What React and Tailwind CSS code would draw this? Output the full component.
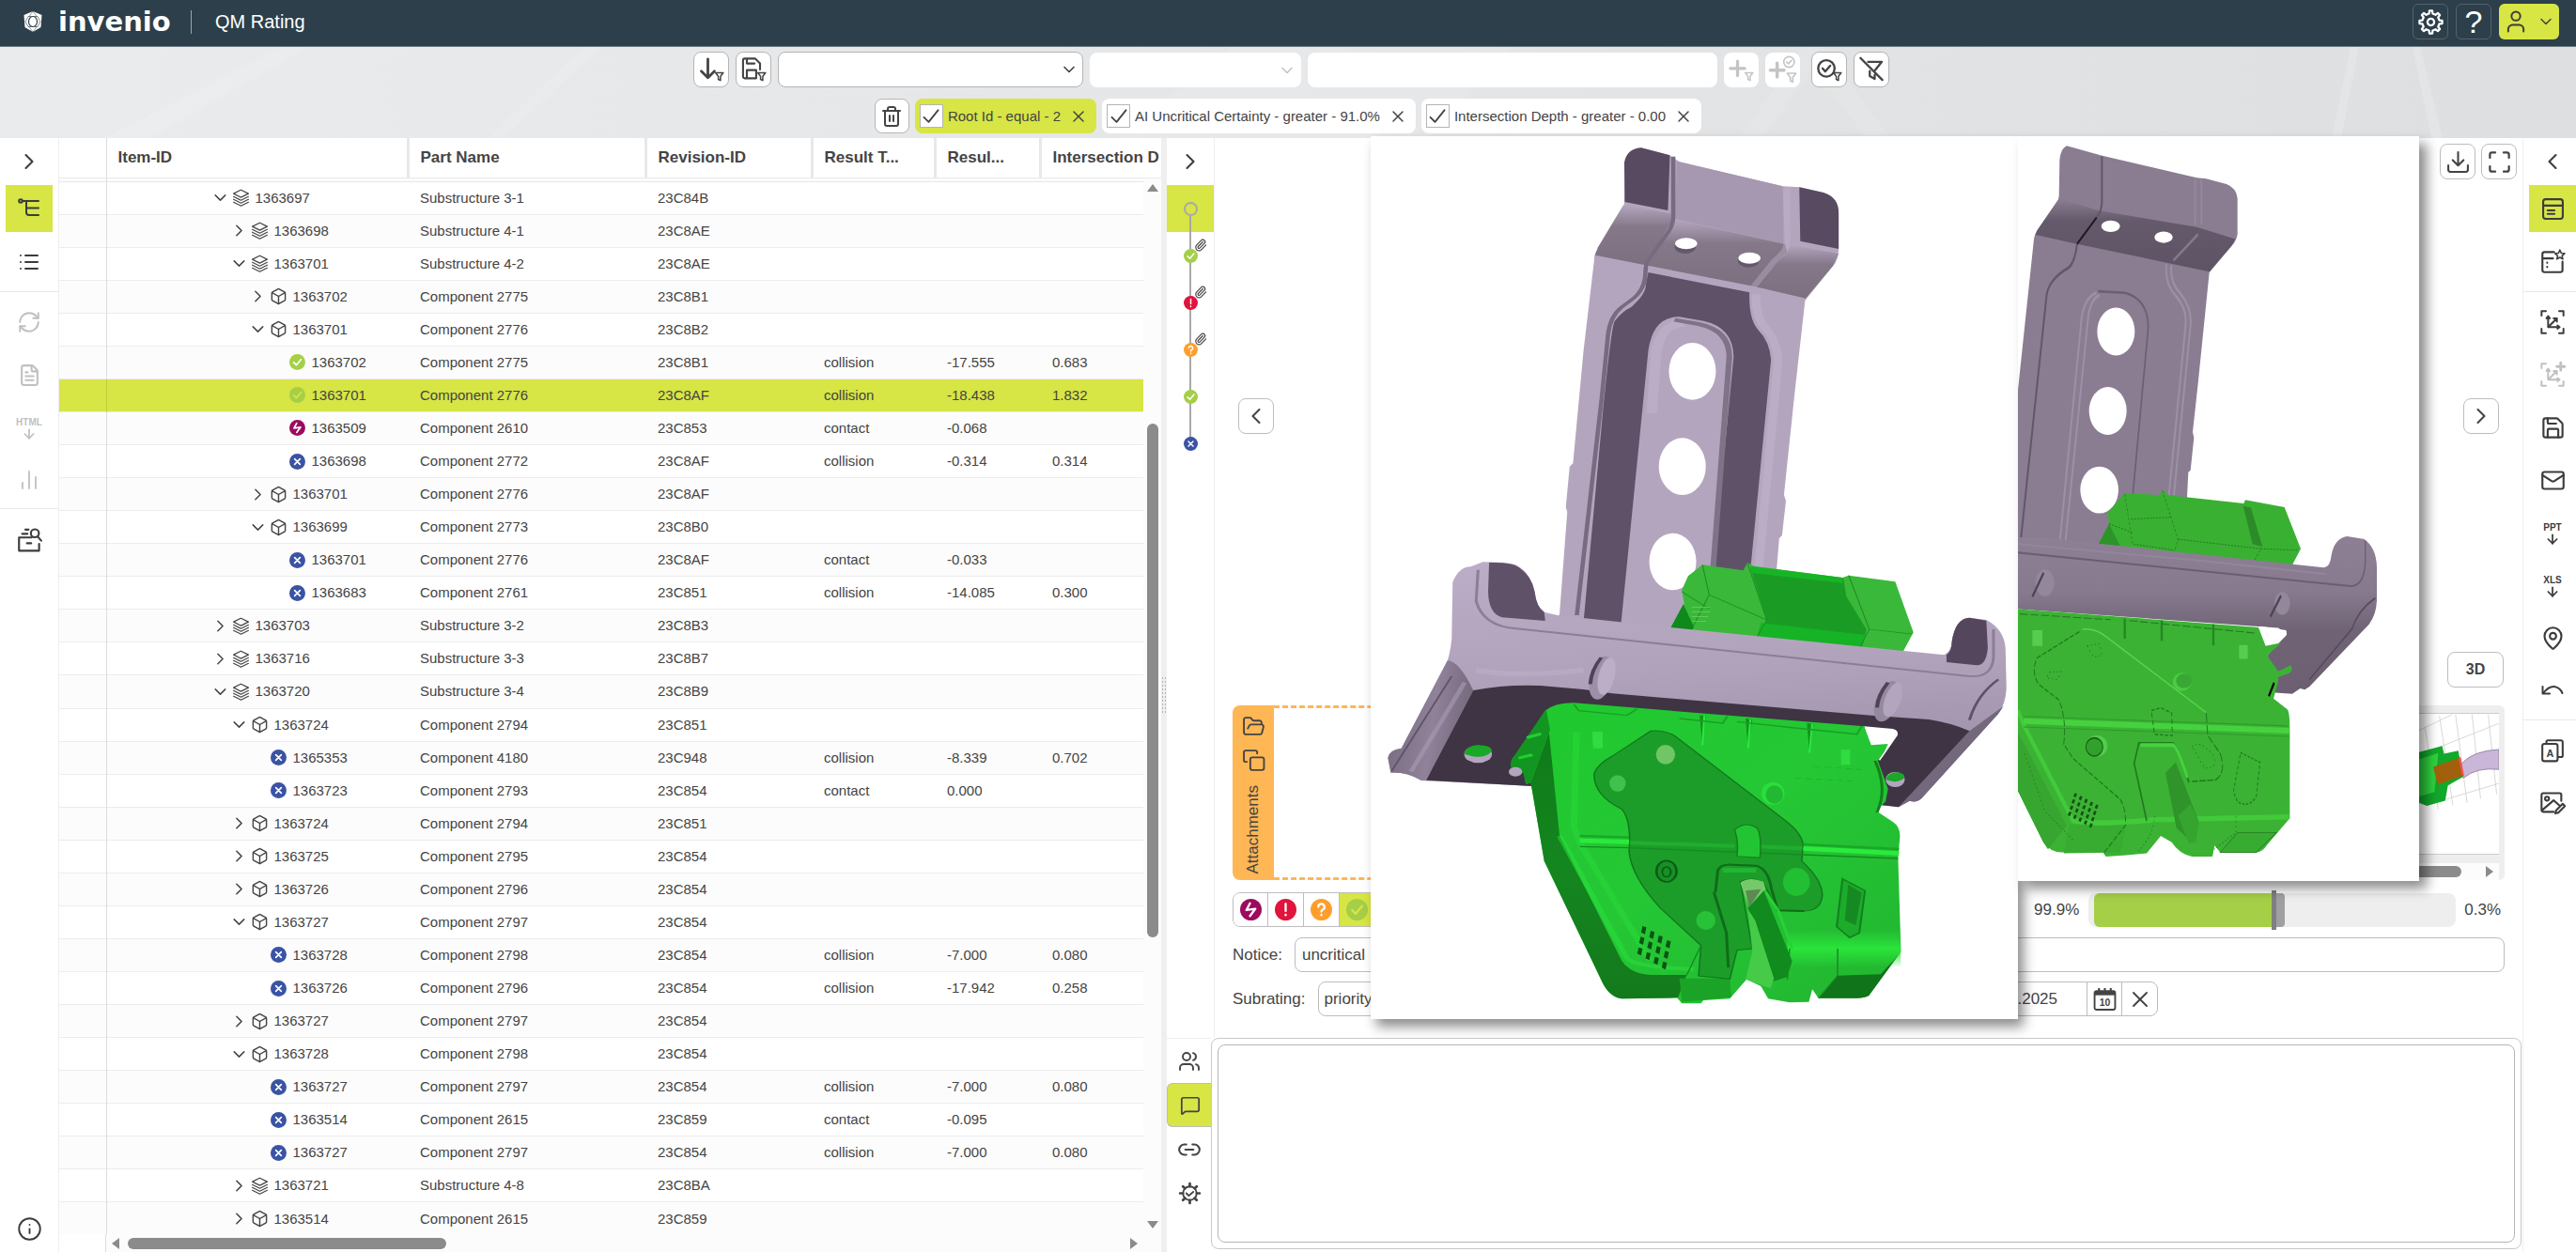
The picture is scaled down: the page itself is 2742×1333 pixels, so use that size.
import React, { useState } from "react";
import {
  ArrowDown,
  Box,
  ChartNoAxesColumn,
  ChevronDown,
  ChevronLeft,
  ChevronRight,
  FileText,
  FolderOpen,
  Info,
  Link2,
  List,
  Mail,
  MapPin,
  Maximize,
  MessageSquare,
  Paperclip,
  RefreshCw,
  Save,
  Trash2,
  User,
  Users,
  X,
} from "lucide-react";

const COLUMNS = [
  { title: "", width: "w-[50px]" },
  { title: "Item-ID", width: "w-[321px]" },
  { title: "Part Name", width: "w-[253px]" },
  { title: "Revision-ID", width: "w-[177px]" },
  { title: "Result T...", width: "w-[131px]" },
  { title: "Resul...", width: "w-[112px]" },
  { title: "Intersection D", width: "w-auto" },
];

// level, kind, open, id, name, revision, type, result, depth
const ROWS = [
  [0, "layers", true, "1363697", "Substructure 3-1", "23C84B"],
  [1, "layers", false, "1363698", "Substructure 4-1", "23C8AE"],
  [1, "layers", true, "1363701", "Substructure 4-2", "23C8AE"],
  [2, "box", false, "1363702", "Component 2775", "23C8B1"],
  [2, "box", true, "1363701", "Component 2776", "23C8B2"],
  [3, "ok", null, "1363702", "Component 2775", "23C8B1", "collision", "-17.555", "0.683"],
  [3, "okSelected", null, "1363701", "Component 2776", "23C8AF", "collision", "-18.438", "1.832"],
  [3, "flash", null, "1363509", "Component 2610", "23C853", "contact", "-0.068"],
  [3, "cross", null, "1363698", "Component 2772", "23C8AF", "collision", "-0.314", "0.314"],
  [2, "box", false, "1363701", "Component 2776", "23C8AF"],
  [2, "box", true, "1363699", "Component 2773", "23C8B0"],
  [3, "cross", null, "1363701", "Component 2776", "23C8AF", "contact", "-0.033"],
  [3, "cross", null, "1363683", "Component 2761", "23C851", "collision", "-14.085", "0.300"],
  [0, "layers", false, "1363703", "Substructure 3-2", "23C8B3"],
  [0, "layers", false, "1363716", "Substructure 3-3", "23C8B7"],
  [0, "layers", true, "1363720", "Substructure 3-4", "23C8B9"],
  [1, "box", true, "1363724", "Component 2794", "23C851"],
  [2, "cross", null, "1365353", "Component 4180", "23C948", "collision", "-8.339", "0.702"],
  [2, "cross", null, "1363723", "Component 2793", "23C854", "contact", "0.000"],
  [1, "box", false, "1363724", "Component 2794", "23C851"],
  [1, "box", false, "1363725", "Component 2795", "23C854"],
  [1, "box", false, "1363726", "Component 2796", "23C854"],
  [1, "box", true, "1363727", "Component 2797", "23C854"],
  [2, "cross", null, "1363728", "Component 2798", "23C854", "collision", "-7.000", "0.080"],
  [2, "cross", null, "1363726", "Component 2796", "23C854", "collision", "-17.942", "0.258"],
  [1, "box", false, "1363727", "Component 2797", "23C854"],
  [1, "box", true, "1363728", "Component 2798", "23C854"],
  [2, "cross", null, "1363727", "Component 2797", "23C854", "collision", "-7.000", "0.080"],
  [2, "cross", null, "1363514", "Component 2615", "23C859", "contact", "-0.095"],
  [2, "cross", null, "1363727", "Component 2797", "23C854", "collision", "-7.000", "0.080"],
  [1, "layers", false, "1363721", "Substructure 4-8", "23C8BA"],
  [1, "box", false, "1363514", "Component 2615", "23C859"],
];

const INDENT = ["pl-[113px]", "pl-[133px]", "pl-[153px]", "pl-[173px]"];

const STATUS = {
  ok: { color: "#a5cf47", mark: "#fff", d: "M6.5 12.5l4 4 7-8.5" },
  okSelected: { color: "#a5cf47", mark: "#d7e545", d: "M6.5 12.5l4 4 7-8.5" },
  flash: { color: "#9c0b5e", mark: "#fff", d: "M11 5L7 12.500l10-1.500-6 8" },
  cross: { color: "#3a53a4", mark: "#fff", d: "M8 8l8 8M16 8l-8 8" },
  alert: { color: "#e0143c", mark: "#fff", d: "M12 5.5v8M12 17.6v.6" },
  ask: { color: "#ff9e2c", mark: "#fff", d: "M8.6 9a3.4 3.4 0 1 1 4.9 3q-1.5.8-1.5 2.2M12 17.6v.6" },
};

function StatusIcon({ kind, className }) {
  const s = STATUS[kind];
  return (
    <svg viewBox="0 0 24 24" className={className} fill="none" aria-hidden="true">
      <circle cx="12" cy="12" r="12" fill={s.color} />
      <path d={s.d} stroke={s.mark} strokeWidth="2.4" strokeLinecap="round" strokeLinejoin="round" />
    </svg>
  );
}

function Glyph({ size = "size-6", weight = 1.8, children }) {
  return (
    <svg
      viewBox="0 0 24 24"
      className={size}
      fill="none"
      stroke="currentColor"
      strokeWidth={weight}
      strokeLinecap="round"
      strokeLinejoin="round"
      aria-hidden="true"
    >
      {children}
    </svg>
  );
}

// closed outline of a toothed wheel around 12/12
function gearPath(teeth, inner, outer) {
  const step = (Math.PI * 2) / teeth;
  const pts = [];
  for (let i = 0; i < teeth; i++) {
    const a = i * step - Math.PI / 2;
    [
      [-0.27, inner],
      [-0.16, outer],
      [0.16, outer],
      [0.27, inner],
    ].forEach(([k, r]) => {
      pts.push(`${(12 + Math.cos(a + k * step) * r).toFixed(2)} ${(12 + Math.sin(a + k * step) * r).toFixed(2)}`);
    });
  }
  return `M${pts.join("L")}Z`;
}

const SMALL_FUNNEL = "M16 15h7l-2.5 3.2V22l-2-1v-2.8z";

function LayersGlyph() {
  return (
    <Glyph size="size-[19px]" weight={1.5}>
      <path d="M12 1.5L22 6.5 12 11.5 2 6.5z" />
      <path d="M2 10.5l10 5 10-5M2 14.2l10 5 10-5M2 18l10 5 10-5" />
    </Glyph>
  );
}

function Header() {
  return (
    <header className="flex h-[50px] shrink-0 items-center border-b border-[#6b7981] bg-[#2c3f4a] pr-[18px] pb-[3px] pl-6 text-white">
      <svg viewBox="0 0 22 24" className="h-6 w-[22px]" fill="none" aria-hidden="true">
        <path d="M11 1l9.500 4-1 13L11 23 2.500 18 1.500 5z" fill="#fff" />
        <path d="M6 6.500h10l3 5.500-3 5.500H6L3 12z" stroke="#2c3f4a" strokeWidth=".6" />
        <ellipse cx="11" cy="12" rx="4.500" ry="5.500" fill="#fff" stroke="#2c3f4a" strokeWidth="1.200" />
        <path d="M11 1L6.500 7M11 1l4.500 6M6.500 17L11 23l4.500-6" stroke="#2c3f4a" strokeWidth=".5" />
      </svg>
      <span className="ml-4 w-[127px] font-['DejaVu_Sans',sans-serif] text-[29px] leading-8 font-bold">invenio</span>
      <span className="ml-[14px] h-[25px] w-px bg-[#9aa5ab]" />
      <h1 className="ml-[25px] text-[20px] leading-6">QM Rating</h1>
      <div className="ml-auto flex items-center gap-2">
        <button aria-label="Settings" className="flex size-[38px] items-center justify-center rounded-md border border-[#53636d]">
          <Glyph size="size-[27px]" weight={2}>
            <path d={gearPath(8, 8.2, 10.8)} />
            <circle cx="12" cy="12" r="3.2" />
          </Glyph>
        </button>
        <button aria-label="Help" className="flex size-[38px] items-center justify-center rounded-md border border-[#53636d] text-[34px] leading-9">
          ?
        </button>
        <button aria-label="User menu" className="flex h-[38px] w-16 items-center justify-center gap-2 rounded-md bg-[#d7e545] text-[#3c3c3c]">
          <User className="size-7" strokeWidth={1.7} />
          <ChevronDown className="size-5" strokeWidth={1.6} />
        </button>
      </div>
    </header>
  );
}

const TOOL_BUTTON = "flex h-[38px] w-[38px] shrink-0 items-center justify-center rounded-lg border border-[#b5b5b5] bg-white";
const TOOL_BUTTON_OFF = "flex h-[37px] w-[37px] shrink-0 items-center justify-center rounded-lg bg-white text-[#c4c4c4]";

function FilterChip({ label, active }) {
  const [checked, setChecked] = useState(true);
  return (
    <div className={`flex h-[37px] items-center rounded-lg pr-[9px] pl-[5px] ${active ? "bg-[#d7e545]" : "bg-white"}`}>
      <label className="flex items-center gap-[5px] text-[15px] leading-5">
        <span className="relative flex size-[25px] items-center justify-center border border-[#b5b5b5] bg-white">
          <input
            type="checkbox"
            checked={checked}
            onChange={(e) => setChecked(e.target.checked)}
            className="absolute inset-0 size-full cursor-pointer opacity-0"
          />
          {checked && (
            <Glyph size="size-5" weight={2.2}>
              <path d="M3 13l6 6L21 4" />
            </Glyph>
          )}
        </span>
        {label}
      </label>
      <button aria-label={`Remove ${label}`} className="ml-[9px]">
        <X className="size-5" strokeWidth={1.8} />
      </button>
    </div>
  );
}

function FilterBar() {
  return (
    <div className="relative flex h-[97px] shrink-0 flex-col items-center gap-3 bg-linear-to-r from-[#e9ebed] via-[#e4e6e8] to-[#dddfe1] pt-[5px]">
      <svg viewBox="0 0 2742 97" preserveAspectRatio="none" className="absolute inset-0 size-full" aria-hidden="true">
        <path d="M300 0L110 97h50L330 0zM620 0l-100 97h16L640 0zM1190 97l120-97h300l-90 97zM1850 97l70-97h22l70 97h-26l-55-75-55 75z" fill="#fff" opacity=".1" />
        <path d="M2502 0l-20 97h10l19-97zM2568 0l20 97h12L2576 0z" fill="#fff" opacity=".16" />
      </svg>
      <div className="relative flex items-center gap-[7px] pl-[6px]">
        <button aria-label="Load filter" className={TOOL_BUTTON}>
          <Glyph size="size-7" weight={2.4}>
            <path d="M9 2.500v17M3 13.500l6 6 6-6" />
            <path d={SMALL_FUNNEL} strokeWidth="1.3" />
          </Glyph>
        </button>
        <button aria-label="Save filter" className={TOOL_BUTTON}>
          <Glyph size="size-7" weight={1.8}>
            <path d="M14 20H4a1.500 1.500 0 0 1-1.500-1.500v-15A1.500 1.500 0 0 1 4 2h9.500L18 6.500V12M6 2v4.500h7M6 20v-7.500h8.500V20" />
            <path d={SMALL_FUNNEL} strokeWidth="1.3" />
          </Glyph>
        </button>
        <div className="relative h-[38px] w-[325px]">
          <select aria-label="Filter attribute" className="size-full appearance-none rounded-lg border border-[#b5b5b5] bg-white px-3" />
          <ChevronDown className="pointer-events-none absolute top-[9px] right-[5px] size-5" />
        </div>
        <div className="relative h-[37px] w-[225px]">
          <select aria-label="Filter operator" disabled className="size-full appearance-none rounded-lg bg-white px-3" />
          <ChevronDown className="pointer-events-none absolute top-[9px] right-[5px] size-5 text-[#c4c4c4]" />
        </div>
        <input aria-label="Filter value" disabled className="h-[37px] w-[436px] rounded-lg bg-white px-3" />
        <button aria-label="Add filter" disabled className={TOOL_BUTTON_OFF}>
          <Glyph size="size-7" weight={2.8}>
            <path d="M9 4.500v13M2.500 11h13" />
            <path d={SMALL_FUNNEL} strokeWidth="1.3" />
          </Glyph>
        </button>
        <button aria-label="Add rating filter" disabled className={TOOL_BUTTON_OFF}>
          <Glyph size="size-8" weight={2.6}>
            <path d="M8 7v11M2.500 12.500h11" />
            <circle cx="17.500" cy="6" r="4.200" strokeWidth="1.2" />
            <path d="M15.500 6l1.500 1.500 2.500-2.800" strokeWidth="1.2" />
            <path d={SMALL_FUNNEL} strokeWidth="1.2" />
          </Glyph>
        </button>
        <div className="flex gap-[7px] pl-[5px]">
          <button aria-label="Apply rating filter" className={TOOL_BUTTON}>
            <Glyph size="size-7" weight={2}>
              <circle cx="9.500" cy="11" r="7.500" />
              <path d="M6 11l2.500 2.800L13 8.500" />
              <path d={SMALL_FUNNEL} strokeWidth="1.3" />
            </Glyph>
          </button>
          <button aria-label="Clear filter" className={TOOL_BUTTON}>
            <Glyph size="size-7" weight={2}>
              <path d="M2 1.500l20 20M9 5h12.500l-6 7.500M10.500 13.500V18l4.500 2.500V17" />
            </Glyph>
          </button>
        </div>
      </div>
      <div className="relative flex items-center gap-[6px]">
        <button aria-label="Delete filters" className="flex h-[37px] w-[37px] items-center justify-center rounded-lg border border-[#b5b5b5] bg-white">
          <Trash2 className="size-6" strokeWidth={2} />
        </button>
        <FilterChip label="Root Id - equal - 2" active />
        <FilterChip label="AI Uncritical Certainty - greater - 91.0%" />
        <FilterChip label="Intersection Depth - greater - 0.00" />
      </div>
    </div>
  );
}

function RailButton({ label, active, disabled, children }) {
  return (
    <button
      aria-label={label}
      disabled={disabled}
      className={`flex h-[50px] w-[50px] shrink-0 flex-col items-center justify-center ${active ? "bg-[#d7e545]" : ""} ${
        disabled ? "text-[#c0c0c0]" : "text-[#3c3c3c]"
      }`}
    >
      {children}
    </button>
  );
}

function ExportIcon({ label }) {
  return (
    <>
      <span className="pt-1 text-[10px] leading-[9px] font-bold">{label}</span>
      <ArrowDown className="size-4" strokeWidth={2.6} />
    </>
  );
}

function LeftRail() {
  return (
    <nav className="flex w-[63px] shrink-0 flex-col items-center border-r border-[#eee]">
      <RailButton label="Expand menu">
        <ChevronRight className="size-7" strokeWidth={1.8} />
      </RailButton>
      <RailButton label="Tree view" active>
        <Glyph size="size-6" weight={2}>
          <circle cx="3" cy="4" r="1.800" />
          <path d="M5 4h17M9 4v12q0 3 3 3h10M9 11.500h13" />
        </Glyph>
      </RailButton>
      <div className="mt-[7px] flex w-full flex-col items-center border-b border-[#e8e8e8] pb-[6px]">
        <RailButton label="List view">
          <List className="size-6" />
        </RailButton>
      </div>
      <div className="flex w-full flex-col items-center gap-[6px] border-b border-[#e8e8e8] pt-[7px] pb-[5px]">
        <RailButton label="Refresh" disabled>
          <RefreshCw className="size-[26px]" strokeWidth={1.8} />
        </RailButton>
        <RailButton label="Report" disabled>
          <FileText className="size-[25px]" />
        </RailButton>
        <RailButton label="HTML export" disabled>
          <ExportIcon label="HTML" />
        </RailButton>
        <RailButton label="Statistics" disabled>
          <ChartNoAxesColumn className="size-6" strokeWidth={1.8} />
        </RailButton>
      </div>
      <div className="pt-[7px]">
        <RailButton label="Search archive">
          <Glyph size="size-[27px]" weight={1.9}>
            <path d="M14 10H2v12.500h19V16M9.500 15.500h4M5 6.500h5M8 2.500h3" />
            <circle cx="17" cy="6" r="3.800" />
            <path d="M19.500 9l3.500 4" />
          </Glyph>
        </RailButton>
      </div>
      <div className="mt-auto">
        <RailButton label="Info">
          <Info className="size-[27px]" strokeWidth={1.7} />
        </RailButton>
      </div>
    </nav>
  );
}

function ItemCell({ level, kind, open, id }) {
  const leaf = open === null;
  return (
    <div className={`flex items-center ${INDENT[level]}`}>
      {leaf ? (
        <span className="w-4" />
      ) : (
        <button aria-label={open ? "Collapse" : "Expand"} className="flex w-4 justify-center">
          {open ? (
            <ChevronDown className="size-[21px] shrink-0" strokeWidth={1.7} />
          ) : (
            <ChevronRight className="size-[21px] shrink-0" strokeWidth={1.7} />
          )}
        </button>
      )}
      <span className="mr-[6px] ml-1 flex size-[19px] items-center justify-center">
        {kind === "layers" && <LayersGlyph />}
        {kind === "box" && <Box className="size-[19px]" strokeWidth={1.8} />}
        {leaf && <StatusIcon kind={kind} className="size-[17px]" />}
      </span>
      {id}
    </div>
  );
}

function PartsTable() {
  return (
    <section className="flex min-w-0 shrink grow-[1173] basis-0 flex-col">
      <div className="relative min-h-0 flex-1 overflow-hidden">
        <table className="h-[calc(100%+2px)] w-full table-fixed border-collapse text-left whitespace-nowrap">
          <colgroup>
            {COLUMNS.map((c, i) => (
              <col key={i} className={c.width} />
            ))}
          </colgroup>
          <thead>
            <tr className="h-[42px]">
              {COLUMNS.map((c, i) => (
                <th
                  key={i}
                  scope="col"
                  className={`overflow-hidden border-b border-b-[#e8e8e8] pr-0 pl-3 text-[17px] leading-5 font-bold ${
                    i === 0 ? "border-r border-r-[#ddd]" : i < 6 ? "border-r-3 border-r-[#e8e8e8]" : ""
                  }`}
                >
                  {c.title}
                </th>
              ))}
            </tr>
          </thead>
          <tbody className="text-[15px] leading-5">
            <tr className="h-1 border-b border-[#e8e8e8] bg-[#fcfcfc]">
              <td className="border-r border-[#ddd] p-0" />
              <td colSpan={6} className="p-0" />
            </tr>
            {ROWS.map(([level, kind, open, id, ...cells], i) => (
              <tr
                key={i}
                className={`h-[35px] border-b border-[#ececec] ${
                  kind === "okSelected" ? "bg-[#d7e545]" : i % 2 ? "bg-[#fcfcfc]" : "bg-white"
                }`}
              >
                <td className={`border-r p-0 ${kind === "okSelected" ? "border-[#c2cf3e]" : "border-[#ddd]"}`} />
                <td className="p-0">
                  <ItemCell level={level} kind={kind} open={open} id={id} />
                </td>
                {[0, 1, 2, 3, 4].map((c) => (
                  <td key={c} className="py-0 pr-0 pl-[13px]">
                    {cells[c]}
                  </td>
                ))}
              </tr>
            ))}
          </tbody>
        </table>
        <div className="absolute top-[43px] right-0 bottom-0 flex w-[19px] flex-col items-center bg-[#fcfcfc] pt-[6px] pb-[6px]">
          <span className="border-x-6 border-b-8 border-x-transparent border-b-[#8b8b8b]" />
          <div className="flex w-3 flex-1 flex-col py-2">
            <div className="grow-[240]" />
            <div className="grow-[550] rounded-full bg-[#8b8b8b]" />
            <div className="grow-[296]" />
          </div>
          <span className="border-x-6 border-t-8 border-x-transparent border-t-[#8b8b8b]" />
        </div>
      </div>
      <div className="flex h-[19px] shrink-0">
        <div className="w-[50px] border-r border-[#ddd]" />
        <div className="flex min-w-0 flex-1 items-center bg-[#fcfcfc] pr-[25px] pl-[6px]">
          <span className="border-y-6 border-r-8 border-y-transparent border-r-[#8b8b8b]" />
          <div className="mx-[9px] h-3 flex-1">
            <div className="h-3 w-[32%] rounded-full bg-[#8b8b8b]" />
          </div>
          <span className="border-y-6 border-l-8 border-y-transparent border-l-[#8b8b8b]" />
        </div>
      </div>
    </section>
  );
}

function Splitter() {
  return (
    <div className="flex w-[6px] shrink-0 items-center bg-[#efefef]">
      <div className="h-10 w-[6px] bg-[radial-gradient(#b5b5b5_1px,transparent_1px)] bg-size-[3px_4px]" />
    </div>
  );
}

const HISTORY = [
  { kind: "ok", clip: true },
  { kind: "alert", clip: true },
  { kind: "ask", clip: true },
  { kind: "ok" },
  { kind: "cross" },
];

function HistoryRail() {
  return (
    <nav className="flex w-[51px] shrink-0 flex-col border-r border-[#eee]">
      <RailButton label="Expand history">
        <ChevronRight className="size-7" strokeWidth={1.8} />
      </RailButton>
      <button aria-label="Current state" className="relative flex h-[50px] w-[50px] items-center justify-center bg-[#d7e545]">
        <span className="absolute top-[33px] h-[18px] w-[2px] bg-[#a8a8a8]" />
        <span className="size-[15px] rounded-full border-2 border-[#a8a8a8]" />
      </button>
      {HISTORY.map((h, i) => (
        <button key={i} aria-label={`State ${i + 1}`} className="relative flex h-[50px] w-[50px] items-center justify-center">
          <span className={`absolute top-0 w-[2px] bg-[#a8a8a8] ${i === HISTORY.length - 1 ? "h-6" : "h-[50px]"}`} />
          <StatusIcon kind={h.kind} className="relative size-[15px]" />
          {h.clip && <Paperclip className="absolute top-[7px] left-[29px] size-[14px]" />}
        </button>
      ))}
    </nav>
  );
}

// bracket and latch, seen from below
function BracketDrawing() {
  return (
    <svg viewBox="116 15 1350 2820" preserveAspectRatio="none" className="size-full" role="img" aria-label="Bracket with latch">
      <defs>
        <linearGradient id="bend" x1="0" y1="0" x2="0" y2="1">
          <stop offset="0" stopColor="#b4a5bf" />
          <stop offset=".35" stopColor="#857989" />
          <stop offset="1" stopColor="#7b6f80" />
        </linearGradient>
        <linearGradient id="beam" x1="0" y1="0" x2=".12" y2="1">
          <stop offset="0" stopColor="#bcadc8" />
          <stop offset=".5" stopColor="#b0a2ba" />
          <stop offset=".8" stopColor="#a395ad" />
          <stop offset="1" stopColor="#8b7f95" />
        </linearGradient>
        <linearGradient id="wing" x1="0" y1="0" x2="1" y2=".2">
          <stop offset="0" stopColor="#74687c" />
          <stop offset=".6" stopColor="#8f8299" />
          <stop offset="1" stopColor="#766a7f" />
        </linearGradient>
        <linearGradient id="latch" x1="0" y1="0" x2="1" y2="1">
          <stop offset="0" stopColor="#1fc92e" />
          <stop offset=".5" stopColor="#25c735" />
          <stop offset="1" stopColor="#22b530" />
        </linearGradient>
        <linearGradient id="latchSide" x1="0" y1="0" x2="0" y2="1">
          <stop offset="0" stopColor="#0f7a18" />
          <stop offset=".5" stopColor="#14861f" />
          <stop offset="1" stopColor="#137a1c" />
        </linearGradient>
        <linearGradient id="lip" x1="0" y1="0" x2="0" y2="1">
          <stop offset="0" stopColor="#2ae43b" stopOpacity="0" />
          <stop offset=".5" stopColor="#2ae43b" />
          <stop offset="1" stopColor="#2ae43b" stopOpacity="0" />
        </linearGradient>
      </defs>
      <path
        d="M645 225L646 100Q650 55 680 52L738 75L760 97L975 175L1010 178L1060 195Q1092 210 1092 260V375Q1092 410 1080 430L1022 540L1000 840L978 1160L982 1180L974 1290L968 1300L960 1450L950 1700L500 1600L510 1540L526 1215L523 1200L531 1070L538 1060L560 700L583 400Q584 385 590 375L643 260Z"
        fill="#b4a5bf"
      />
      <path d="M755 95L975 175L980 360L750 278Z" fill="#a698b0" />
      <path d="M646 225L645 100Q650 55 680 52L740 76L736 252Z" fill="#584a60" />
      <path d="M1010 178L1060 195Q1092 210 1092 260V375L1012 350Z" fill="#584a60" />
      <path d="M643 235L742 262V295L690 432L583 400L590 370Z" fill="url(#bend)" />
      <path d="M746 280L980 360L985 385L915 500L690 430Z" fill="url(#bend)" />
      <path d="M990 362L1092 390L1080 430L1022 535L915 498L985 385Z" fill="url(#bend)" />
      <path d="M984 178V355Q986 380 960 410L915 495" fill="none" stroke="#c2b3cd" strokeWidth="14" opacity=".4" />
      <path d="M583 400L690 432L915 500L1020 537" fill="none" stroke="#b4a5bf" strokeWidth="10" />
      <path
        d="M747 80V270Q747 300 735 325L695 410Q690 420 689 450Q689 505 660 538L640 560Q615 590 611 650L598 850L546 1545"
        fill="none"
        stroke="#776b80"
        strokeWidth="9"
      />
      <path
        d="M695 450L906 514Q904 600 925 635Q948 670 951 730L908 1400V1600H558L600 900Q618 620 625 605Q640 575 660 560Q690 520 690 490Z"
        fill="#5f5168"
      />
      <path d="M637 1590L695 700Q705 590 760 592L810 605Q872 625 873 720L830 1400V1600Z" fill="#b4a5bf" />
      <path d="M702 900L712 700Q722 615 770 612" fill="none" stroke="#c2b3cd" strokeWidth="22" opacity=".6" />
      <path d="M750 602L800 615Q864 635 864 720L822 1560" fill="none" stroke="#7f7388" strokeWidth="12" />
      <path d="M920 520Q918 590 940 630Q962 665 966 730L925 1400" fill="none" stroke="#c2b3cd" strokeWidth="18" opacity=".6" />
      <g fill="#fff">
        <ellipse cx="787" cy="766" rx="49" ry="91" />
        <ellipse cx="766" cy="1070" rx="49" ry="91" />
        <ellipse cx="746" cy="1374" rx="49" ry="91" />
      </g>
      <ellipse cx="772" cy="370" rx="22" ry="20" fill="#64586c" />
      <ellipse cx="904" cy="414" rx="22" ry="20" fill="#64586c" />
      <ellipse cx="774" cy="358" rx="23" ry="18" fill="#fff" />
      <ellipse cx="906" cy="404" rx="23" ry="18" fill="#fff" />

      <g transform="translate(0 1320)">
        {/* connector */}
        <path d="M740 270L770 190L765 145L778 100L808 64L893 82L902 57L915 68L1100 105L1113 98L1210 118L1248 280L1225 345Z" fill="#3ab83a" />
        <path d="M740 270L768 190L790 262L785 280Z" fill="#0e8a1c" />
        <path d="M908 75L1102 108L1108 165L1150 270L1140 335L925 300L942 240Z" fill="#1a9c24" />
        <path d="M930 250L1148 288L1140 335L920 300Z" fill="#16b326" />
        <path d="M908 68L1100 105V122L912 90Z" fill="#17b526" />
        <path
          d="M1113 98L1156 270L1135 330M1156 270L1246 285M808 64L822 160L942 240L920 300M822 160L788 262M765 150L822 205M902 60L942 240"
          fill="none"
          stroke="#1f8a24"
          strokeWidth="2"
        />
        <path d="M786 200H824M786 215H824M786 230H820M788 245H816" stroke="#6fd06a" strokeWidth="2" />
        {/* cross beam */}
        <path
          d="M287 120Q300 70 325 70L350 55Q400 55 420 65Q450 90 458 150Q462 200 478 215L505 225L740 264L1312 352Q1327 340 1328 310Q1335 235 1365 233L1400 240Q1437 270 1440 330L1442 460Q1440 510 1425 540L1265 810Q1255 825 1240 818L1217 838L1192 833L1000 800L445 770L222 753Q190 725 158 728L152 680Q155 655 180 650L272 390Q282 350 285 300Z"
          fill="url(#beam)"
        />
        <path d="M276 370Q300 370 330 465L232 752L222 753Q190 725 158 728L152 680Q155 655 180 650Z" fill="url(#wing)" />
        <path d="M160 722L285 420" stroke="#5f5468" strokeWidth="4" />
        <path d="M200 725L312 440" stroke="#a99cb3" strokeWidth="10" opacity=".6" />
        <path d="M1365 595L1436 515L1425 540L1265 810Q1255 825 1240 818L1217 838Z" fill="#74687d" />
        <path
          d="M330 465Q400 445 470 450L560 462L620 475L1160 545L1280 558Q1330 570 1365 595L1217 838L1192 833L1100 820L445 770L232 752Z"
          fill="#3e3443"
        />
        <path d="M1145 580L1205 588Q1217 592 1215 608L1178 690L1160 650Z" fill="#fff" />
        <path d="M363 57Q410 55 425 72Q452 100 458 150Q462 200 478 215L480 243L390 232Q362 220 361 150Z" fill="#5f5168" />
        <path d="M1317 352Q1328 340 1328 310Q1335 235 1365 233L1400 242L1403 330Q1400 385 1380 385L1317 375Z" fill="#54465c" />
        <path d="M340 80L336 180Q350 260 420 268L1365 420Q1412 425 1415 360V270" fill="none" stroke="#8b7e95" strokeWidth="6" />
        <path d="M335 400Q420 425 560 400" fill="none" stroke="#c6b8d1" strokeWidth="16" opacity=".35" />
        <path d="M1425 430Q1380 480 1365 560" fill="none" stroke="#5d5266" strokeWidth="6" />
        <ellipse cx="597" cy="425" rx="24" ry="70" fill="#9c8fa7" transform="rotate(8 597 425)" />
        <ellipse cx="608" cy="420" rx="17" ry="60" fill="#bdaec8" transform="rotate(8 608 420)" />
        <path d="M597 360Q576 400 574 445" fill="none" stroke="#4e4357" strokeWidth="8" />
        <ellipse cx="1193" cy="500" rx="24" ry="66" fill="#9589a0" transform="rotate(12 1193 500)" />
        <ellipse cx="1205" cy="495" rx="17" ry="56" fill="#b3a5be" transform="rotate(12 1205 495)" />
        <path d="M1195 440Q1174 480 1172 520" fill="none" stroke="#4e4357" strokeWidth="8" />
        <ellipse cx="340" cy="669" rx="29" ry="28" fill="#b4a5bf" />
        <path d="M311 668Q315 642 340 640Q368 640 369 660Q350 690 311 668Z" fill="#19a827" />
        <ellipse cx="1210" cy="750" rx="20" ry="24" fill="#b4a5bf" />
        <path d="M1190 750Q1195 728 1215 727Q1232 732 1229 745Q1215 765 1190 750Z" fill="#19a827" />
        {/* latch housing */}
        <path
          d="M480 530Q500 505 540 505L660 520L1145 580L1160 640L1195 636L1188 660L1174 690L1195 780L1190 820L1170 850L1205 885Q1220 900 1220 930L1216 1000L1222 1300L1155 1440Q1145 1448 1130 1448H1050L1037 1420L1030 1460L990 1462L945 1450L930 1410L900 1388L865 1450L810 1455L805 1465H765L755 1447L640 1450Q615 1445 600 1400L478 1010L450 760L440 765L435 730L410 715Q405 690 420 670Z"
          fill="url(#latch)"
        />
        <path d="M482 525L415 675Q405 690 410 715L435 730L440 765L450 760L490 590Z" fill="#139522" />
        <path d="M445 615L468 605M428 680L450 672" stroke="#24cc34" strokeWidth="9" strokeLinecap="round" />
        <ellipse cx="418" cy="725" rx="14" ry="15" fill="#b4a5bf" />
        <path
          d="M488 600L510 930L640 1330Q660 1372 700 1374H775L757 1447L640 1450Q615 1445 600 1400L478 1010L450 760Z"
          fill="url(#latchSide)"
        />
        <path d="M1090 1376L1180 1372L1222 1300L1155 1440Q1145 1448 1130 1448H1050Z" fill="#10741a" />
        <path d="M760 1385H865L868 1445L765 1460Z" fill="#1aa327" />
        <path d="M545 600L540 900L555 960L700 1330" fill="none" stroke="#2ae43b" strokeWidth="14" opacity=".35" />
        <path d="M510 930L650 1320Q670 1350 790 1355" fill="none" stroke="#2ae43b" strokeWidth="12" opacity=".5" />
        <path d="M985 1230H1220L1222 1350H985Z" fill="url(#lip)" />
        <path
          d="M700 595Q725 590 750 610L980 880Q1015 920 1018 960L1015 1010Q1058 1070 1058 1120Q1055 1170 1020 1170L965 1168L940 1095Q930 1055 887 1075L912 1290L880 1295L865 1387L800 1377L805 1280L720 1160Q660 1060 655 980Q660 880 640 845Q580 800 582 730Q590 700 620 675Z"
          fill="#1c9d29"
          stroke="#12771c"
          strokeWidth="3"
        />
        <path d="M552 930L655 935M1018 957L1218 972" fill="none" stroke="#18a826" strokeWidth="7" />
        <path d="M552 945L655 949M1018 970L1218 986" fill="none" stroke="#2bea3d" strokeWidth="14" />
        <path d="M657 952L875 962M925 964L1016 970" fill="none" stroke="#21ae2f" strokeWidth="12" />
        <path d="M552 964L655 968L1016 990L1216 1002" fill="none" stroke="#158c21" strokeWidth="4" />
        <path
          d="M835 1110L840 1040Q845 1020 870 1022L920 1025Q945 1035 952 1100L965 1168L1020 1170M832 1110L858 1240L862 1350"
          fill="none"
          stroke="#106c1a"
          strokeWidth="6"
        />
        <path d="M850 1040H920" stroke="#22b732" strokeWidth="14" />
        <path d="M887 1080Q905 1058 935 1076L940 1100L905 1160Z" fill="#76c96b" />
        <path d="M898 1105L930 1100L905 1160Z" fill="#5b8a52" />
        <path d="M936 1105L995 1330L985 1380L955 1395L903 1160Z" fill="#118a1e" />
        <path d="M903 1165L918 1200L957 1385L950 1417L898 1388L912 1300Z" fill="#45cb47" />
        <path d="M940 1110L966 1168L995 1290" fill="none" stroke="#28d238" strokeWidth="6" />
        <path d="M875 910Q900 880 922 905Q932 930 928 1000L880 995Q884 950 875 910Z" fill="#23c433" stroke="#12801c" strokeWidth="3" />
        <g stroke="none">
          <ellipse cx="731" cy="670" rx="20" ry="31" fill="#70c564" />
          <ellipse cx="631" cy="762" rx="17" ry="26" fill="#40c14b" />
          <ellipse cx="1004" cy="1077" rx="28" ry="45" fill="#22be33" />
          <ellipse cx="815" cy="1200" rx="20" ry="30" fill="#28c238" />
          <ellipse cx="955" cy="794" rx="24" ry="36" fill="#2ade3b" />
          <ellipse cx="958" cy="798" rx="18" ry="29" fill="#21b931" />
        </g>
        <ellipse cx="733" cy="1043" rx="21" ry="34" fill="#189026" stroke="#0c5c15" strokeWidth="5" />
        <ellipse cx="733" cy="1045" rx="9" ry="16" fill="none" stroke="#0c5c15" strokeWidth="4" />
        {[0, 1, 2, 3].map((c) =>
          [0, 1, 2].map((r) => (
            <path
              key={`${c}-${r}`}
              d={`M${683 + c * 17 - r * 4} ${1218 + c * 15 + r * 34}l8 4l-3 22l-8 -6z`}
              fill="#0b5313"
            />
          ))
        )}
        <path d="M1100 1067L1147 1105L1135 1240L1115 1255L1088 1220Z" fill="#1cab2a" stroke="#138020" strokeWidth="4" />
        <path d="M1112 1085L1140 1112L1128 1215L1105 1200Z" fill="#168a22" />
        <path d="M802 545L815 545L808 640ZM898 555L912 558L903 650ZM1026 570L1040 572L1031 665Z" fill="#13931f" />
        <path d="M812 545L808 640M908 558L903 650M1037 572L1031 665" stroke="#2bea3d" strokeWidth="4" />
        <path
          d="M540 510L550 530L650 545L672 524M760 555L850 570L860 548M880 565L1000 585L1130 605L1140 580"
          fill="none"
          stroke="#18a026"
          strokeWidth="4"
        />
        <path d="M578 597H600V650H580ZM1097 655H1116V703H1097Z" fill="#30dc40" />
        <path d="M1040 708L1140 718M1000 745L1120 755" stroke="#1bb02b" strokeWidth="2" strokeDasharray="14 8" />
        <path d="M1168 690Q1195 780 1172 855" fill="none" stroke="#12801c" strokeWidth="6" />
        <path d="M1090 1290V1376L1050 1448M990 1290L985 1390M775 1375L805 1280" fill="none" stroke="#178b23" strokeWidth="3" />
      </g>
    </svg>
  );
}

// the same assembly from a second camera, cut off on the left
function SecondViewDrawing() {
  return (
    <svg viewBox="144 10 1281 1556" preserveAspectRatio="none" className="size-full" role="img" aria-label="Bracket with latch, second view">
      <defs>
        <linearGradient id="beam2" x1="0" y1="0" x2="0" y2="1">
          <stop offset="0" stopColor="#8d8095" />
          <stop offset=".35" stopColor="#877a8f" />
          <stop offset=".6" stopColor="#6f6375" />
          <stop offset="1" stopColor="#6b5f71" />
        </linearGradient>
        <linearGradient id="bend2" x1="0" y1="0" x2="0" y2="1">
          <stop offset="0" stopColor="#8b7e93" />
          <stop offset=".3" stopColor="#655a6b" />
          <stop offset="1" stopColor="#5e5364" />
        </linearGradient>
      </defs>
      <path
        d="M275 135L277 60Q280 35 300 30L410 50L715 97L745 99L810 110Q842 118 845 140V215Q840 232 825 240L755 295L720 520L702 628L706 640L695 708L688 712L675 880L144 870V540L195 225Q197 215 205 207L272 145Z"
        fill="#8a7d92"
      />
      <path d="M275 140L400 165L715 200L838 225L825 240L755 293L325 234L200 216L205 207Z" fill="url(#bend2)" />
      <path
        d="M412 52V150Q410 168 395 180L333 235Q325 275 305 285Q240 310 235 345L152 860"
        fill="none"
        stroke="#62576a"
        strokeWidth="6"
      />
      <path d="M395 180L333 235" stroke="#1d1921" strokeWidth="5" />
      <g fill="none" stroke="#9c90a5" strokeWidth="6">
        <path d="M710 100V195M730 100V195M719 215L640 270" opacity=".6" />
        <path d="M618 278Q612 320 650 345Q682 370 680 400L626 760M634 280Q628 315 662 338Q700 368 695 405L642 760" />
        <path d="M278 855L348 385Q360 345 395 337M296 855L368 390Q375 350 405 342" />
      </g>
      <path d="M400 334L485 337Q560 350 560 410L505 800" fill="none" stroke="#6b6072" strokeWidth="5" />
      <g fill="#fff">
        <ellipse cx="457" cy="418" rx="60" ry="50" />
        <ellipse cx="431" cy="584" rx="60" ry="50" />
        <ellipse cx="404" cy="749" rx="61" ry="49" />
        <ellipse cx="440" cy="198" rx="30" ry="12" />
        <ellipse cx="609" cy="221" rx="29" ry="12" />
      </g>
      <path d="M398 866L435 820L430 797L485 755L597 760L605 748L625 760L865 777L870 770L995 785L1047 872L1015 912Z" fill="#3ab032" />
      <path d="M863 782L888 786L925 868L893 862Z" fill="#2c8b29" />
      <path d="M398 866L435 820L470 866Z" fill="#2c9429" />
      <path
        d="M485 758L510 862L645 875M605 750L655 852L645 875M655 852L920 872L900 895M435 820L510 838M920 872L1040 875M505 810L635 806"
        fill="none"
        stroke="#237c20"
        strokeWidth="2"
        strokeDasharray="6 4"
      />
      <path
        d="M144 848L240 850L1120 911Q1140 912 1145 885Q1155 850 1195 846L1250 852Q1288 870 1290 910V980Q1288 1010 1265 1030L1075 1160L1060 1166L1045 1164L1020 1175L955 1172L940 1095L1003 1050L975 1037L144 998Z"
        fill="url(#beam2)"
      />
      <path d="M144 880L1205 950Q1250 950 1253 900V855" fill="none" stroke="#6a5f71" strokeWidth="4" />
      <path d="M144 862L700 895L1130 925" fill="none" stroke="#93869c" strokeWidth="4" />
      <path d="M1285 975Q1230 1000 1210 1040L1075 1145" fill="none" stroke="#564b5c" strokeWidth="4" />
      <ellipse cx="230" cy="943" rx="30" ry="28" fill="#93879c" />
      <path d="M226 922L190 972" stroke="#4c4252" strokeWidth="6" />
      <ellipse cx="988" cy="986" rx="25" ry="24" fill="#93879c" />
      <path d="M984 970L950 1014" stroke="#4c4252" strokeWidth="6" />
      <path d="M918 1034L1000 1042Q1005 1050 998 1055L970 1072L935 1062Z" fill="#fff" />
      <path
        d="M144 998L912 1036L935 1075L985 1068L940 1095L975 1128L1015 1115Q1025 1125 1010 1132L975 1140V1150L960 1185L1005 1208Q1012 1215 1012 1250L1012 1435L940 1490Q925 1506 905 1506H790L772 1492L765 1515H700Q660 1510 635 1485L600 1472L555 1508L490 1512L425 1515L415 1506H290Q250 1508 225 1485L144 1378Z"
        fill="#3bb234"
      />
      <path d="M144 1255L300 1450L240 1500L225 1485L144 1378Z" fill="#37a630" />
      <path d="M290 1508L310 1448H490L470 1506Z" fill="#38ab31" />
      <path d="M144 1210L162 1240L320 1440Q400 1450 580 1438L1010 1432" fill="none" stroke="#45cf3d" strokeWidth="11" opacity=".8" />
      <path d="M162 1232L1010 1252" stroke="#46d23e" strokeWidth="12" />
      <path d="M162 1222L1005 1242M162 1244L1010 1264" stroke="#2f9a2a" strokeWidth="2" />
      <path d="M845 1465H970L905 1506H790Z" fill="#38ab31" stroke="#2a8526" strokeWidth="2" />
      <g fill="none" stroke="#227a1f" strokeWidth="3">
        <path
          d="M340 1045L205 1100Q185 1130 210 1155L275 1188Q300 1230 290 1280L320 1310L470 1395Q490 1415 487 1450L420 1506"
          strokeDasharray="14 5"
        />
        <path d="M745 1215L750 1262L790 1300Q810 1340 775 1355L700 1358" strokeDasharray="20 5" />
        <path d="M555 1440L515 1320L530 1278H640Q655 1290 690 1360" strokeWidth="5" />
        <path d="M570 1210L600 1204L635 1215L637 1262L580 1260Z" strokeDasharray="10 6" />
        <path d="M855 1298L917 1318L905 1390Q880 1415 845 1400L832 1380Z" strokeDasharray="7 5" />
        <path
          d="M700 1285Q720 1270 765 1300Q790 1330 740 1330ZM365 1075L405 1070L412 1095L385 1098ZM245 1130L282 1128L270 1145L235 1142Z"
          strokeDasharray="4 8"
          strokeWidth="2"
        />
        <path d="M165 1300L230 1420L320 1480M840 1430V1465L770 1500M580 1430Q580 1470 525 1506" strokeDasharray="4 6" strokeWidth="2" />
        <path d="M485 1018V1060M603 1022V1064M768 1030V1074" strokeWidth="7" opacity=".8" />
        <path d="M150 1008L440 1020M500 1022L900 1048" strokeDasharray="26 8" strokeWidth="2" />
      </g>
      <path d="M350 1040Q390 1038 420 1053L745 1214" fill="none" stroke="#58d650" strokeWidth="3" />
      <path d="M535 1282H640Q655 1290 685 1350" fill="none" stroke="#46d23e" strokeWidth="8" />
      <path d="M615 1340L648 1318L720 1440L700 1485L650 1455Z" fill="#2f9429" />
      <path d="M655 1430L695 1405L722 1445L712 1485L690 1488Z" fill="#36a530" />
      <path d="M190 1042H222V1075H190ZM850 1073H878V1102H850Z" fill="#58cc50" />
      <ellipse cx="668" cy="1150" rx="30" ry="19" fill="#4ccb45" />
      <ellipse cx="674" cy="1148" rx="25" ry="15" fill="#39a832" />
      <ellipse cx="396" cy="1284" rx="34" ry="22" fill="#50cf48" />
      <ellipse cx="388" cy="1286" rx="27" ry="19" fill="#32a02c" stroke="#1a5a18" strokeWidth="3" />
      <path d="M962 1152L945 1180" stroke="#000" strokeWidth="6" />
      {[0, 1, 2, 3, 4].map((c) =>
        [0, 1, 2, 3].map((r) => (
          <path key={`${c}-${r}`} d={`M${326 + c * 17 - r * 6} ${1382 + c * 6 + r * 13}l7 2l-5 8l-7 -3z`} fill="#174f15" />
        ))
      )}
    </svg>
  );
}

function CableThumb() {
  return (
    <svg viewBox="1160 340 208 322" preserveAspectRatio="none" className="h-full w-[85px]" role="img" aria-label="Cable preview">
      <rect x="1160" y="340" width="208" height="322" fill="#fff" />
      <path
        d="M1160 378L1245 342M1160 435L1368 362M1160 500L1368 430M1180 550L1368 500M1175 370L1210 560M1213 345L1248 550M1255 342L1285 545M1298 342L1320 535M1340 342L1362 525"
        stroke="#d2d2d2"
        strokeWidth="2"
        fill="none"
      />
      <path d="M1270 455Q1300 425 1368 422V468Q1310 462 1275 488Z" fill="#c9b6d8" stroke="#8f80a0" strokeWidth="2" />
      <path d="M1160 428L1220 414L1225 432L1262 425L1275 485L1235 505L1228 540L1180 552L1160 545Z" fill="#12a82a" />
      <path d="M1160 445L1210 430L1200 520L1160 530Z" fill="#2ed23f" />
      <path d="M1197 462L1268 440L1274 482L1208 503Z" fill="#a3600c" />
      <path d="M1265 440L1275 483" stroke="#ff4d4d" strokeWidth="5" />
    </svg>
  );
}

function Attachments() {
  return (
    <div className="flex h-[186px] shrink-0">
      <div className="flex w-11 flex-col items-center justify-between rounded-l-lg bg-[#ffb655] pt-[10px] pb-[7px]">
        <div className="flex flex-col items-center gap-[11px]">
          <button aria-label="Open folder" className="block">
            <FolderOpen className="block size-[25px]" strokeWidth={1.8} />
          </button>
          <button aria-label="Copy attachments" className="block">
            <Glyph size="block size-[25px]" weight={1.8}>
              <rect x="8.500" y="9" width="14" height="13" rx="2" />
              <path d="M15.500 5V3.500a1.500 1.500 0 0 0-1.500-1.500H3.500A1.500 1.500 0 0 0 2 3.500V12a1.500 1.500 0 0 0 1.500 1.500H5" />
            </Glyph>
          </button>
        </div>
        <span className="rotate-180 text-[17px] leading-5 [writing-mode:vertical-rl]">Attachments</span>
      </div>
      <div className="flex-1 border-y-3 border-dashed border-[#ffb655]" />
      <div className="flex w-[600px] flex-col rounded-r-md bg-[#eee] pt-2 pr-[6px]">
        <div className="flex h-[151px] justify-end border-y border-[#ccc] bg-white">
          <CableThumb />
        </div>
        <div className="mt-[9px] flex h-[18px] items-center gap-[26px] bg-[#fcfcfc] pr-[6px]">
          <div className="h-3 flex-1 rounded-full bg-[#8b8b8b]" />
          <span className="border-y-6 border-l-8 border-y-transparent border-l-[#8b8b8b]" />
        </div>
      </div>
    </div>
  );
}

const RATINGS = [
  { kind: "flash", label: "Penetration" },
  { kind: "alert", label: "Critical" },
  { kind: "ask", label: "Unclear" },
  { kind: "okSelected", label: "Uncritical" },
  { kind: "cross", label: "Unrated" },
];

const FRAME_BUTTON = "flex size-[38px] items-center justify-center rounded-lg border border-[#bdbdbd] bg-white";

function Viewer() {
  const [certainty, setCertainty] = useState(49);
  return (
    <div className="relative flex min-w-0 flex-1 flex-col px-[19px] pb-[23px] text-[17px] leading-6">
      <div className="-mx-[13px] flex min-h-0 flex-1 flex-col pt-[6px] pb-[19px]">
        <div className="flex justify-end gap-[6px]">
          <button aria-label="Download" className={FRAME_BUTTON}>
            <Glyph size="size-[25px]" weight={2}>
              <path d="M12 2v13M6.500 10l5.500 5.500 5.500-5.500M2 15.500V20a2 2 0 0 0 2 2h16a2 2 0 0 0 2-2v-4.500" />
            </Glyph>
          </button>
          <button aria-label="Fullscreen" className={FRAME_BUTTON}>
            <Maximize className="size-[27px]" />
          </button>
        </div>
        <div className="flex flex-1 items-center justify-between px-[19px]">
          <button aria-label="Previous image" className={FRAME_BUTTON}>
            <ChevronLeft className="size-7" strokeWidth={1.8} />
          </button>
          <button aria-label="Next image" className={FRAME_BUTTON}>
            <ChevronRight className="size-7" strokeWidth={1.8} />
          </button>
        </div>
        <div className="flex justify-end px-[14px]">
          <button className="h-[38px] w-[60px] rounded-lg border border-[#bdbdbd] bg-white text-[16px] font-bold">3D</button>
        </div>
      </div>

      <Attachments />

      <div className="mt-[13px] flex h-[37px] shrink-0 items-center">
        <div className="flex h-full overflow-hidden rounded-lg border border-[#bdbdbd]">
          {RATINGS.map((r, i) => (
            <button
              key={r.kind}
              aria-label={r.label}
              className={`flex items-center justify-center ${i > 0 ? "w-[38px] border-l border-[#bdbdbd]" : "w-9"} ${
                r.kind === "okSelected" ? "bg-[#d7e545]" : "bg-white"
              }`}
            >
              <StatusIcon kind={r.kind} className="size-[23px]" />
            </button>
          ))}
        </div>
        <label htmlFor="certainty" className="ml-auto">
          99.9%
        </label>
        <div className="relative mr-[9px] ml-[10px] flex h-9 w-[391px] items-center rounded-lg bg-[#eee] pl-[6px]">
          <div className="h-full rounded-l-md bg-[#a5cf47]" style={{ width: `${certainty}%` }} />
          <div className="h-[42px] w-[5px] bg-[#808080]" />
          <div className="h-full w-[9px] rounded-r-sm bg-[#a0a0a0]" />
          <input
            id="certainty"
            type="range"
            value={certainty}
            onChange={(e) => setCertainty(Number(e.target.value))}
            className="absolute inset-0 size-full cursor-pointer opacity-0"
          />
        </div>
        <span className="mr-1">0.3%</span>
      </div>

      <div className="mt-[11px] flex h-[37px] shrink-0 items-center gap-[13px]">
        <label htmlFor="notice">Notice:</label>
        <input id="notice" defaultValue="uncritical" className="h-full min-w-0 flex-1 rounded-lg border border-[#bdbdbd] px-[7px]" />
      </div>

      <div className="mt-[10px] flex h-[37px] shrink-0 items-center">
        <label htmlFor="subrating" className="mr-[13px]">
          Subrating:
        </label>
        <select id="subrating" className="h-full w-[300px] appearance-none rounded-lg border border-[#bdbdbd] bg-white px-[6px]">
          <option>priority</option>
        </select>
        <div className="ml-auto flex h-full w-[293px] rounded-lg border border-[#bdbdbd]">
          <input aria-label="Due date" defaultValue=".2025" className="min-w-0 flex-1 rounded-l-lg pr-[31px] text-right" />
          <button aria-label="Pick date" className="flex w-[37px] items-center justify-center border-l border-[#bdbdbd]">
            <svg viewBox="0 0 24 24" className="size-[25px]" fill="none" stroke="currentColor" strokeWidth="1.8" aria-hidden="true">
              <rect x="1.500" y="4" width="21" height="19" rx="2" />
              <path d="M1.500 6.500h21" strokeWidth="3.600" />
              <path d="M6 1v5M12 1v5M18 1v5" strokeWidth="2" />
              <text x="12" y="19.500" textAnchor="middle" fontSize="10" fontWeight="bold" fill="currentColor" stroke="none">
                10
              </text>
            </svg>
          </button>
          <button aria-label="Clear date" className="flex w-[38px] items-center justify-center border-l border-[#bdbdbd]">
            <X className="size-7" strokeWidth={1.6} />
          </button>
        </div>
        <div className="w-[369px]" />
      </div>

      {/* enlarged screenshots floating above the form */}
      <div className="absolute -top-[2px] left-[166px] h-[940px] w-[689px] bg-white shadow-[6px_8px_12px_rgba(0,0,0,0.45)]">
        <BracketDrawing />
      </div>
      <div className="absolute -top-[2px] left-[855px] h-[793px] w-[427px] bg-white shadow-[8px_8px_12px_rgba(0,0,0,0.45)]">
        <SecondViewDrawing />
      </div>
    </div>
  );
}

function CommentPanel() {
  const tab = "flex h-[47px] w-[48px] items-center justify-center";
  return (
    <div className="flex h-[228px] shrink-0 pb-[3px]">
      <nav className="w-[47px] shrink-0 border-t border-[#eee]">
        <button aria-label="Participants" className={tab}>
          <Users className="size-6" strokeWidth={1.9} />
        </button>
        <button aria-label="Comments" className={`${tab} rounded-l-md border border-r-0 border-[#bdbdbd] bg-[#d7e545]`}>
          <MessageSquare className="size-[22px]" strokeWidth={1.9} />
        </button>
        <button aria-label="Links" className={tab}>
          <Link2 className="size-[26px]" strokeWidth={1.9} />
        </button>
        <button aria-label="Approval" className={tab}>
          <Glyph size="size-[25px]" weight={1.8}>
            <circle cx="12" cy="12" r="7" />
            <path d="M12 5V2M12 22v-3M5 12H2M22 12h-3M7 7L5 5M19 19l-2-2M7 17l-2 2M19 5l-2 2" strokeWidth="2.600" />
            <path d="M8.500 12l2.500 2.500 4.500-4" />
          </Glyph>
        </button>
      </nav>
      <div className="mr-px flex-1 rounded-lg border border-[#c8c8c8] p-[6px]">
        <textarea aria-label="Comment" className="block size-full resize-none rounded-lg border border-[#b5b5b5] p-2" />
      </div>
    </div>
  );
}

function AxesGlyph({ plus }) {
  return (
    <Glyph size="size-7" weight={1.7}>
      <path d="M2 6V2h4M2 18v4h4M18 22h4v-4" />
      {plus ? <path d="M19.500 1v7M16 4.500h7" strokeWidth="2.400" /> : <path d="M18 2h4v4" />}
      <path d="M8 7v9.500h10M8 16.500L15.500 9M6.500 8.500L8 6.500l1.500 2M16.500 15l2 1.500-2 1.500M13 8.500h3v3" />
    </Glyph>
  );
}

function RightRail() {
  return (
    <nav className="flex w-[57px] shrink-0 flex-col items-end border-l border-[#eee]">
      <RailButton label="Collapse panel">
        <ChevronLeft className="size-7" strokeWidth={1.8} />
      </RailButton>
      <RailButton label="Details" active>
        <Glyph size="size-[25px]" weight={2}>
          <rect x="2" y="2" width="20" height="20" rx="2.500" />
          <path d="M2 8.500h20M6.500 13.500h7M6.500 17h7" />
        </Glyph>
      </RailButton>
      <div className="mt-[6px] flex w-full justify-end border-b border-[#e8e8e8] pb-[7px]">
        <RailButton label="Favourites">
          <Glyph size="size-[27px]" weight={1.9}>
            <path d="M13 3H4a2 2 0 0 0-2 2v15a2 2 0 0 0 2 2h15a2 2 0 0 0 2-2v-8M2 9h10M6.500 13v.2M6.500 17v.2" />
            <path d="M18.500 1l1.300 3 3.200.3-2.400 2.200.7 3.200-2.800-1.700-2.800 1.700.7-3.200L14 4.300l3.200-.3z" strokeWidth="1.400" />
          </Glyph>
        </RailButton>
      </div>
      <div className="flex w-full flex-col items-end gap-[6px] border-b border-[#e8e8e8] pt-[7px] pb-[6px]">
        <RailButton label="Fit view">
          <AxesGlyph />
        </RailButton>
        <RailButton label="Add view" disabled>
          <AxesGlyph plus />
        </RailButton>
        <RailButton label="Save">
          <Save className="size-[27px]" strokeWidth={1.9} />
        </RailButton>
        <RailButton label="Mail">
          <Mail className="size-[27px]" strokeWidth={1.9} />
        </RailButton>
        <RailButton label="PPT export">
          <ExportIcon label="PPT" />
        </RailButton>
        <RailButton label="XLS export">
          <ExportIcon label="XLS" />
        </RailButton>
        <RailButton label="Locate">
          <MapPin className="size-[27px]" strokeWidth={1.9} />
        </RailButton>
        <RailButton label="Undo">
          <Glyph size="size-6" weight={2}>
            <path d="M1.500 8v7.500H9M2 15Q8 7.500 14 8q6 1 8.500 7" />
          </Glyph>
        </RailButton>
      </div>
      <div className="flex flex-col gap-[6px] pt-[7px]">
        <RailButton label="Annotations">
          <svg viewBox="0 0 24 24" className="size-[26px]" fill="none" stroke="currentColor" strokeWidth="1.9" strokeLinejoin="round" aria-hidden="true">
            <rect x="2" y="5.500" width="15" height="17" rx="2" />
            <path d="M6 5V3.500A1.500 1.500 0 0 1 7.500 2H20a2 2 0 0 1 2 2v13a1.500 1.500 0 0 1-1.500 1.500H17.500" />
            <text x="9.500" y="18" textAnchor="middle" fontSize="10" fontWeight="bold" fill="currentColor" stroke="none">
              A
            </text>
          </svg>
        </RailButton>
        <RailButton label="Edit image">
          <Glyph size="size-7" weight={1.8}>
            <path d="M13 20H3.500A1.500 1.500 0 0 1 2 18.500v-14A1.500 1.500 0 0 1 3.500 3h15A1.500 1.500 0 0 1 20 4.500V10M2 19l11-9.500 5 4.500" />
            <circle cx="7" cy="8" r="1.800" />
            <path d="M14.500 21.500l.8-2.800 6-6 2 2-6 6z" />
          </Glyph>
        </RailButton>
      </div>
    </nav>
  );
}

export default function App() {
  return (
    <div className="flex h-screen flex-col overflow-hidden bg-white font-['Liberation_Sans',Arial,sans-serif] text-[#444]">
      <Header />
      <FilterBar />
      <main className="flex min-h-0 flex-1">
        <LeftRail />
        <PartsTable />
        <Splitter />
        <div className="flex min-w-0 shrink grow-[1443] basis-0 flex-col">
          <div className="flex min-h-0 flex-1">
            <HistoryRail />
            <Viewer />
          </div>
          <CommentPanel />
        </div>
        <RightRail />
      </main>
    </div>
  );
}
